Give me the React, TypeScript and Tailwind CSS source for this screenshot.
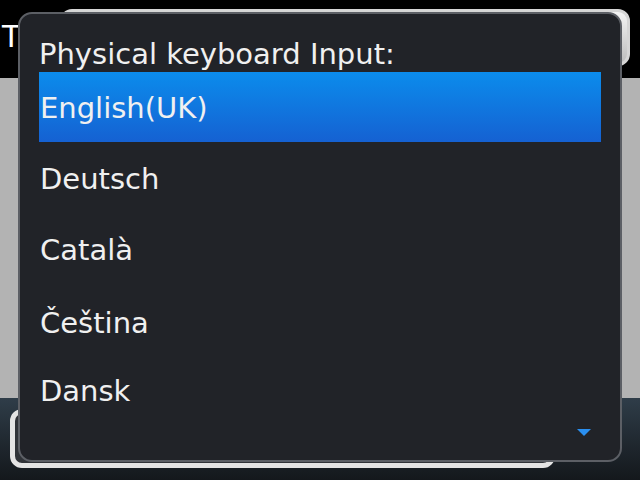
import React from "react";

const items = [
  { label: "English(UK)", pad: "pt-[19px]" },
  { label: "Deutsch", pad: "pt-[20px]" },
  { label: "Català", pad: "pt-[21px]" },
  { label: "Čeština", pad: "pt-[24px]" },
  { label: "Dansk", pad: "pt-[22px]" },
];

export default function App() {
  return (
    <div className="relative w-[640px] h-[480px] overflow-hidden flex flex-col bg-black font-['DejaVu_Sans',sans-serif]">
      {/* Screen behind the popup */}
      <div className="h-[78px] bg-black flex items-start">
        <div className="w-[60px] pl-[2px] pt-[22px] text-[30px] leading-none text-white">T</div>
        <div className="mt-[9px] w-[570px] h-[57px] rounded-[12px] border-[3px] border-[#d6d6d6] bg-gradient-to-b from-[#f4f4f4] to-[#bdbdbd]" />
      </div>
      <div className="h-[320px] bg-[#b3b3b3]" />
      <div className="flex-1 bg-gradient-to-b from-[#2f3d49] to-[#14181c] pl-[10px] pt-[11px]">
        <div className="w-[545px] h-[59px] rounded-[12px] border-[5px] border-[#e4e4e4] bg-[#303338]" />
      </div>

      {/* Popup list */}
      <div className="absolute left-[18px] top-[12px] w-[604px] h-[450px] rounded-[14px] border-2 border-[#5c5f65] bg-[#212328] flex flex-col pl-[19px] pr-[19px] text-[#f0f0f0]">
        <div className="h-[58px] pt-[23px] text-[29px] leading-[34px] whitespace-nowrap">Physical keyboard Input:</div>
        {items.map((item, i) => (
          <div
            key={item.label}
            className={
              i === 0
                ? `h-[70px] ${item.pad} pl-px text-[29px] leading-[34px] bg-gradient-to-b from-[#0b8cec] to-[#1561d2]`
                : `h-[70px] ${item.pad} pl-px text-[29px] leading-[34px]`
            }
          >
            {item.label}
          </div>
        ))}
        <div className="flex-1 flex justify-end items-start pt-[7px] pr-[10px]">
          <svg width="14" height="7" viewBox="0 0 14 7">
            <path d="M0 0 L14 0 L7 7 Z" fill="#2a8ff0" />
          </svg>
        </div>
      </div>
    </div>
  );
}
